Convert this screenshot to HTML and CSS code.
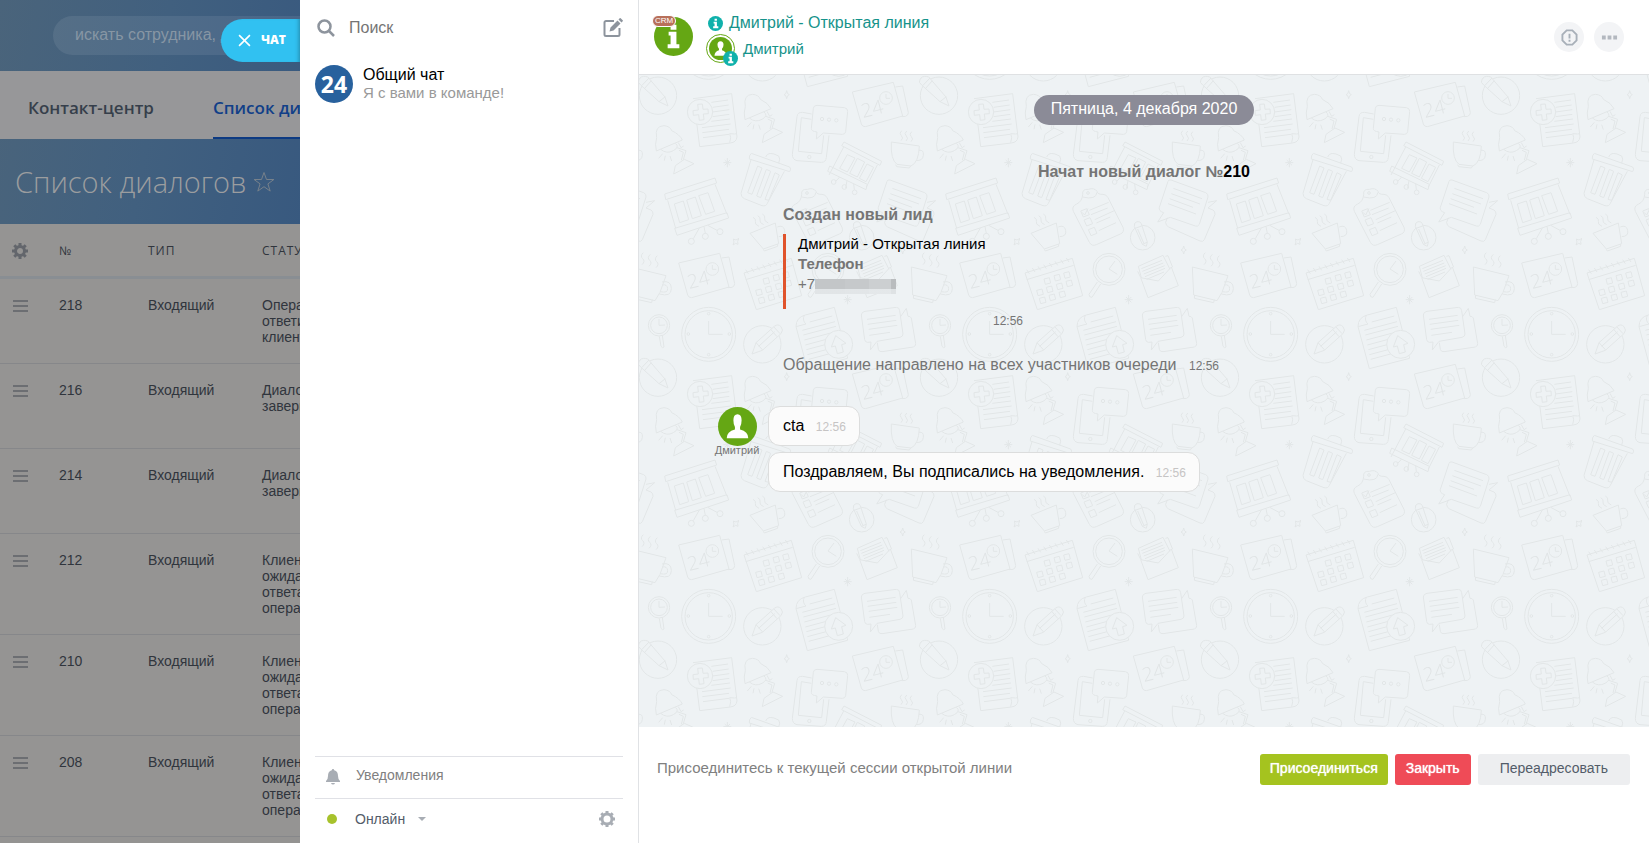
FILE: index.html
```
<!DOCTYPE html>
<html lang="ru">
<head>
    <meta charset="UTF-8">
    <meta name="viewport" content="width=device-width, initial-scale=1.0">
    <title>Чат</title>
    <link rel="stylesheet" href="styles.css">
</head>
<body>
    <!-- Portal page under the slider -->
    <div class="portal">
        <header class="portal-header">
            <input type="text" class="portal-search" placeholder="искать сотрудника, документ" aria-label="Поиск по порталу">
        </header>
        <nav class="portal-nav">
            <a href="#">Контакт-центр</a>
            <a href="#" class="active">Список диалогов</a>
        </nav>
        <div class="portal-title">
            <h1>Список диалогов</h1>
            <svg class="star" viewBox="0 0 22 22"><path d="M11 1.5l2.500 7h7.400l-6 4.400 2.300 7.200-6.200-4.400-6.200 4.400 2.300-7.200-6-4.400h7.400z"/></svg>
        </div>
        <table class="grid">
            <thead>
                <tr>
                    <th class="col-menu"><svg class="gear" viewBox="0 0 16 16"><circle cx="8" cy="8" r="4.500"/><path d="M8 0v3M8 13v3M0 8h3M13 8h3M2.300 2.300l2.200 2.200M11.500 11.500l2.200 2.200M2.300 13.700l2.200-2.200M11.500 4.500l2.200-2.200"/></svg></th>
                    <th class="col-id">№</th>
                    <th class="col-type">ТИП</th>
                    <th class="col-status">СТАТУС</th>
                </tr>
            </thead>
            <tbody>
                <tr><td><span class="burger"></span></td><td>218</td><td>Входящий</td><td>Оператор ответил клиенту</td></tr>
                <tr><td><span class="burger"></span></td><td>216</td><td>Входящий</td><td>Диалог завершен</td></tr>
                <tr><td><span class="burger"></span></td><td>214</td><td>Входящий</td><td>Диалог завершен</td></tr>
                <tr><td><span class="burger"></span></td><td>212</td><td>Входящий</td><td>Клиент ожидает ответа оператора</td></tr>
                <tr><td><span class="burger"></span></td><td>210</td><td>Входящий</td><td>Клиент ожидает ответа оператора</td></tr>
                <tr><td><span class="burger"></span></td><td>208</td><td>Входящий</td><td>Клиент ожидает ответа оператора</td></tr>
            </tbody>
        </table>
        <button class="slider-label">
            <svg viewBox="0 0 12 12"><path d="M1 1l10 10M11 1L1 11"/></svg>
            ЧАТ
        </button>
    </div>

    <!-- Chat list -->
    <aside class="contacts">
        <div class="contacts-search">
            <svg class="icon-search" viewBox="0 0 18 18"><circle cx="7.500" cy="7.500" r="6"/><path d="M12 12l5 5"/></svg>
            <input type="text" placeholder="Поиск" aria-label="Поиск">
            <button class="icon-button" aria-label="Новый чат">
                <svg class="icon-compose" viewBox="0 0 20 20"><path class="line" d="M11 3H3a1.500 1.500 0 0 0-1.500 1.500v12A1.500 1.500 0 0 0 3 18h12a1.500 1.500 0 0 0 1.500-1.500V10"/><path class="fill" d="M6.500 13.500l1-4 7-7 3 3-7 7zM15.500 1.500l1.200-1.200q.5-.5 1 0l2 2q.5.500 0 1l-1.200 1.200z"/></svg>
            </button>
        </div>
        <a href="#" class="contact">
            <span class="contact-avatar">24</span>
            <span class="contact-text">
                <span class="contact-name">Общий чат</span>
                <span class="contact-last">Я с вами в команде!</span>
            </span>
        </a>
        <div class="contacts-footer">
            <a href="#" class="footer-row">
                <svg class="icon-bell" viewBox="0 0 14 16"><path d="M7 0q1.200 0 1.200 1.300C11 2 12 4.300 12 7q0 3.500 2 5v1H0v-1q2-1.500 2-5c0-2.700 1-5 3.800-5.700Q5.800 0 7 0zM5 14h4q-.5 1.500-2 1.500T5 14z"/></svg>
                <span>Уведомления</span>
            </a>
            <div class="footer-row">
                <button class="status-button"><span class="status-dot"></span>Онлайн<span class="caret"></span></button>
                <button class="icon-button" aria-label="Настройки">
                    <svg class="gear" viewBox="0 0 16 16"><circle cx="8" cy="8" r="5"/><path d="M8 0v3M8 13v3M0 8h3M13 8h3M2.300 2.300l2.200 2.200M11.500 11.500l2.200 2.200M2.300 13.700l2.200-2.200M11.500 4.500l2.200-2.200"/></svg>
                </button>
            </div>
        </div>
    </aside>

    <!-- Dialog -->
    <main class="dialog">
        <header class="dialog-header">
            <div class="line-avatar">
                <svg viewBox="0 0 40 40"><circle cx="20" cy="20" r="20"/><path d="M15 15h8v13h3v4H14v-4h3v-9h-2zM17 8h6v5h-6z"/></svg>
                <span class="crm-badge">CRM</span>
            </div>
            <div class="dialog-names">
                <a href="#" class="dialog-title">
                    <svg class="info" viewBox="0 0 16 16"><circle cx="8" cy="8" r="8"/><path d="M6 6h3.500v5H11v2H5.500v-2H7V8H6zM7 3h2.500v2H7z"/></svg>
                    Дмитрий - Открытая линия
                </a>
                <a href="#" class="dialog-user">
                    <span class="user-avatar">
                        <svg class="person" viewBox="0 0 38 38"><circle cx="19" cy="19" r="19"/><path d="M19 7q5 0 5 6 0 4-2.500 6.500v2.500q7 2 7.500 9H9q.5-7 7.500-9v-2.500Q14 17 14 13q0-6 5-6z"/></svg>
                        <svg class="info" viewBox="0 0 16 16"><circle cx="8" cy="8" r="8"/><path d="M6 6h3.500v5H11v2H5.500v-2H7V8H6zM7 3h2.500v2H7z"/></svg>
                    </span>
                    Дмитрий
                </a>
            </div>
            <div class="dialog-actions">
                <button class="round-button" aria-label="Пожаловаться"><svg viewBox="0 0 18 18"><path class="line" d="M6 1.500h6L16.500 6v6L12 16.500H6L1.500 12V6z"/><path class="line" d="M9 5v5M9 11.500v2"/></svg></button>
                <button class="round-button" aria-label="Меню"><svg viewBox="0 0 18 18"><path class="fill" d="M1 7h4v4H1zM7 7h4v4H7zM13 7h4v4h-4z"/></svg></button>
            </div>
        </header>

        <section class="messages">
            <svg class="wallpaper" aria-hidden="true">
                <defs>
                    <pattern id="office" x="100" y="134" width="281" height="282" patternUnits="userSpaceOnUse" viewBox="0 0 843 846">
                        <!-- small cup -->
                        <path d="M33 73l76-31 10 62-46 16zM115 54q18-8 22 10t-18 19M73 121l3 5 40-14v-7M42 25q10 5 7 13t11 14M56 20q10 5 7 13t11 14M70 15q10 5 7 13t11 14"/>
                        <!-- small pencil -->
                        <circle cx="368" cy="86" r="37"/>
                        <path class="cover" d="M343 53q-2-13 8-15t13 6l18 55-3 13-12-6zM345 58l20-7M367 106l14-6M353 60l18 42"/>
                        <!-- calendar -->
                        <path d="M15 192l142-44 31 112-136 42zM20 212l141-43M20 182l8 12M37 177l8 12M54 172l8 12M71 167l8 12M88 162l8 12M105 157l8 12M122 152l8 12M139 147l8 12"/>
                        <path d="M72 210l16-4 4 16-16 4zM102 200l16-4 4 16-16 4zM131 192l16-4 4 16-16 4zM50 244l16-4 4 16-16 4zM79 235l16-4 4 16-16 4zM109 226l16-4 4 16-16 4zM138 217l16-4 4 16-16 4zM58 268l16-4 4 16-16 4zM87 259l16-4 4 16-16 4zM117 250l16-4 4 16-16 4z"/>
                        <!-- magnifier -->
                        <circle cx="267" cy="181" r="48"/><circle cx="267" cy="181" r="40"/>
                        <path d="M285 156l-18 24 25 16M232 219l-25 37q0 10 9 9l26-40"/>
                        <!-- letter -->
                        <path d="M362 206l22 60 91-36-21-56-39 42zM364 206l-9-34 74-33 21 42M353 187l9 18M436 142l8-2 14 35M364 179l62-25M367 187l63-25M371 195l63-25M375 203l60-25M380 211l52-22"/>
                        <!-- cup -->
                        <path d="M517 174l107 26-18 50-15 25-70-17zM612 219q28-6 28 20t-36 16M613 228q15-3 16 11t-22 9M524 258l-1 10 58 13 2-9M556 131q-11 10-2 18t-2 18M577 136q-11 10-2 18t-2 18M598 140q-11 10-2 18t-2 18"/>
                        <!-- planner -->
                        <g id="planner">
                            <path d="M662 162l123-29 28 101-112 32q-10 0-12-8zM791 147l22-3 17 80q0 8-8 11l-12 1"/>
                            <circle cx="763" cy="180" r="19"/><path d="M763 168v13h12"/>
                            <text x="694" y="240" transform="rotate(-14 694 240)">24</text>
                        </g>
                        <use href="#planner" x="-322" y="333"/>
                        <!-- pencil -->
                        <g id="pencil"><circle cx="70" cy="406" r="56"/><path class="cover" d="M39 435l12-34 55-49q11-9 20 1t0 21l-56 50zM51 401l20 22M59 412l48-44M95 361l19 22M104 353l19 21"/></g>
                        <!-- document with arrow -->
                        <path d="M171 353q0-28 28-35l87-23 40 153-121 31zM171 353l30-8q-12-10-5-27M212 339l68-18M190 364l98-26M193 378l98-26M196 393l98-26M199 408l74-20M202 422l60-16M205 437l60-16M209 451l75-20"/>
                        <circle class="cover" cx="299" cy="406" r="42"/>
                        <path d="M290 380l31 23-13 4 5 22-18 5-6-23-12 3z"/>
                        <!-- bubbles -->
                        <path d="M378 307l94-12q9 0 10 10l10 70q0 8-9 10l-69 12-20 26 2-24-10 1q-8 0-9-8l-10-74q0-9 11-11zM384 331l86-12M386 346l86-12M389 361l86-12M391 379l62-9M415 401l3 20q2 8 11 7l94-14q8-3 7-10l-13-77q-3-6-10-5l-5-24-18 26"/>
                        <!-- small magnifier -->
                        <circle cx="603" cy="349" r="32"/><circle cx="603" cy="349" r="25"/>
                        <path d="M603 330v19l18-1M604 382l5 30q4 7 9 2l-5-35"/>
                        <!-- clock -->
                        <circle cx="752" cy="376" r="81"/><circle cx="752" cy="376" r="71"/>
                        <circle cx="752" cy="314" r="4"/><circle cx="752" cy="437" r="4"/><circle cx="691" cy="375" r="4"/><circle cx="814" cy="375" r="4"/>
                        <path d="M752 336v40h42"/>
                        <!-- lamp -->
                        <g id="lamp"><path d="M19 538q-7-35 22-36 19 2 23 15 24 11 32 28L18 578q-5-20 1-40zM31 573q18 15 38 4t6-22M84 553l8 15 8-5M80 568l27 9-8 27M86 576l13 6-6 24M75 622l27-19 29 13-61 31zM37 586l-12 14M45 592l-3 15M59 593l5 15"/></g>
                        <use href="#lamp" x="577" y="94"/>
                        <!-- tablet -->
                        <path d="M218 561l-27-5q-16-1-17 13l-14 113q0 16 14 19l73 5q14 0 15-15l8-66M217 577l-30-5-9 101 70 7 6-55"/>
                        <circle cx="211" cy="690" r="5"/>
                        <path d="M234 535l82 7q10 1 10 11l-6 61q-1 8-10 8l-57-4-21 18 2-21q-18-2-17-11l6-60q1-9 11-9z"/>
                        <circle cx="249" cy="576" r="5"/><circle cx="270" cy="578" r="5"/><circle cx="292" cy="580" r="5"/>
                        <!-- pencil to the right -->
                        <circle cx="600" cy="506" r="56"/>
                        <path class="cover" d="M541 466q2-17 16-18t20 11l44 51 9 27-27-13-54-49zM551 476l22-23M560 484l20-23M603 524l19-15"/>
                        <!-- document with plus -->
                        <path d="M705 515l116-15 16 130q-2 16-20 18l-92 11-15-120M837 620q-4 2-22 0 6 10 0 27M760 526l50-7M764 541l48-7M764 555l50-7M764 569l50-7M760 583l56-7M732 602l86-11M733 617l80-10M735 632l78-10"/>
                        <circle class="cover" cx="726" cy="555" r="38"/>
                        <path d="M719 532l14-1 2 16 15-1 1 14-15 1 2 17-14 2-2-17-16 2-1-14 16-2z"/>
                        <!-- trash -->
                        <path d="M37 679l115 41q6 6 0 14L31 696q-2-10 6-17zM80 690q7-20 39-3 6 8 0 22M36 698L6 799q0 12 10 16l53 21q12 3 16-7l51-96M56 717l-30 80 13 5 30-79zM82 727l-29 80 12 5 30-79zM108 737l-30 80 11 3 32-76z"/>
                        <!-- board -->
                        <path d="M315 645l113 58-5 12-115-59zM314 660l-44 84M415 714l-33 66M272 717l113 55-4 16-115-55zM325 683l23 10-23 42-23-11zM355 694l22 11-22 45-23-11zM384 711l20 10-23 43-20-10zM302 750l-12 13M324 761l-4 22M344 770l2 18"/>
                        <circle cx="284" cy="765" r="7"/><circle cx="316" cy="780" r="7"/><circle cx="347" cy="796" r="7"/>
                        <!-- mug -->
                        <path d="M457 645l84 12q-2 50-25 60l-42-5q-20-14-17-67zM540 670q15-3 13 15t-22 15M470 713l3 6 38 4 4-6M488 611q-9 8-1 15t-1 15M503 612q-9 8-1 15t-1 15M518 614q-9 8-1 15t-1 15"/>
                        <!-- icons that run over the tile edge -->
                        <g id="edge">
                            <path d="M188 803q-2-18 17-16 18-6 26 6 2 10 18 9 10 0 15 10l45 89q5 15-8 20l-72 32q-14 6-21-7l-48-93q-6-15 10-22 16-7 18-28zM188 810q40 10 43-14M182 852l18-7 8 18-18 7zM192 879l18-7 8 18-18 7zM205 908l18-7 8 18-18 7zM186 856l8 8 10-20M208 850l58-24M213 863l50-20M224 878l61-28M229 888l42-18M236 911l52-24"/>
                            <circle cx="204" cy="798" r="4"/>
                            <path d="M453 759l104 38q9 4 7 13l-26 82q-5 8-12 5l-75-26-38 14 18-28q-16-5-13-16l26-78q2-6 9-4zM460 784l86 31M454 800l86 31M449 815l70 26M444 830l84 31M442 872l-5 14q0 10 9 14l94 42q9 4 13-4l32-76q1-8-6-13l-15-6 26-22-26 5"/>
                            <path d="M620 801l151-48 5 15-153 50zM629 820l24 84M771 772l36 90M650 904l157-47 5 16-155 52zM649 831l27-9 16 56-27 9zM686 819l26-9 18 56-27 9zM722 806l28-9 20 56-27 9zM724 903l-18 32M738 899l4 20M749 895l28 15"/>
                            <circle cx="700" cy="943" r="9"/><circle cx="742" cy="928" r="9"/><circle cx="786" cy="914" r="9"/>
                        </g>
                        <use href="#edge" y="-846"/>
                        <!-- sparkles -->
                        <path d="M491 111q1 11 8 12-7 1-8 12-1-11-8-12 7-1 8-12zM143 491q1 11 8 12-7 1-8 12-1-11-8-12 7-1 8-12zM826 90l8 3 9-5-4 9 1 9-7-3-8 5 3-9z"/>
                        <path d="M326 258v28M314 272h24M318 264l16 16M334 264l-16 16M808 693v28M796 707h24M800 699l16 16M816 699l-16 16"/>
                    </pattern>
                </defs>
                <rect width="100%" height="100%" fill="url(#office)"/>
            </svg>

            <div class="date-label"><span>Пятница, 4 декабря 2020</span></div>
            <div class="session-start">Начат новый диалог №<b>210</b></div>

            <div class="system lead">
                <strong>Создан новый лид</strong>
                <div class="attach">
                    <a href="#">Дмитрий - Открытая линия</a>
                    <strong>Телефон</strong>
                    <span class="phone">+7<span class="mosaic"></span></span>
                </div>
                <time>12:56</time>
            </div>

            <div class="system">
                <span>Обращение направлено на всех участников очереди</span>
                <time>12:56</time>
            </div>

            <div class="message">
                <div class="author">
                    <svg class="person" viewBox="0 0 38 38"><circle cx="19" cy="19" r="19"/><path d="M19 7q4 0 4 6 0 4-1.500 6.500v2.500q8 2 8 8.500h-21q0-6.500 8-8.500v-2.500Q15 17 15 13q0-6 4-6z"/></svg>
                    <span>Дмитрий</span>
                </div>
                <div class="bubbles">
                    <div class="bubble">cta <time>12:56</time></div>
                    <div class="bubble">Поздравляем, Вы подписались на уведомления. <time>12:56</time></div>
                </div>
            </div>
        </section>

        <footer class="join-panel">
            <span class="join-text">Присоединитесь к текущей сессии открытой линии</span>
            <button class="btn btn-green">Присоединиться</button>
            <button class="btn btn-red">Закрыть</button>
            <button class="btn btn-gray">Переадресовать</button>
        </footer>
    </main>
</body>
</html>
```
FILE: styles.css
```
* {
    box-sizing: border-box;
}

body {
    margin: 0;
    display: flex;
    height: 100vh;
    overflow: hidden;
    font-family: "Liberation Sans", Arial, sans-serif;
    font-size: 16px;
    line-height: 20px;
    background-color: #fff;
    color: #000;
}

a {
    color: inherit;
    text-decoration: none;
}

button, input {
    font-family: inherit;
    border: none;
    background: none;
    padding: 0;
    outline: none;
}

button {
    cursor: pointer;
}

svg {
    display: block;
    flex: none;
}

/* Portal */
.portal {
    position: relative;
    flex: none;
    width: 300px;
    overflow: hidden;
    background: linear-gradient(100deg, #4a647b 0, #41607f 50%, #38597f 100%) 0 0 / 100% 240px no-repeat #949392;
}

.portal-header {
    height: 71px;
    padding: 16px 0 0 53px;
}

.portal-search {
    width: 400px;
    height: 39px;
    padding: 0 22px 2px;
    border-radius: 20px;
    background-color: rgba(255, 255, 255, 0.08);
    font-size: 16px;
}

.portal-search::placeholder {
    color: #8796a4;
    opacity: 1;
}

.portal-nav {
    display: flex;
    gap: 59px;
    height: 68px;
    padding-left: 28px;
    background-color: #979799;
    font: 600 17px/74px "Open Sans", sans-serif;
    color: #363f4b;
    white-space: nowrap;
}

.portal-nav .active {
    height: 68px;
    color: #113f88;
    border-bottom: 2px solid #0d3a82;
}

.portal-title {
    display: flex;
    align-items: center;
    gap: 6px;
    height: 85px;
    padding-left: 15px;
}

.portal-title h1 {
    margin: 0;
    font: 300 29px/40px "Open Sans", sans-serif;
    color: #9b9d9f;
}

.star {
    width: 22px;
    height: 22px;
    fill: none;
    stroke: #77818b;
}

.gear {
    width: 16px;
    height: 16px;
    fill: none;
    stroke: #63666c;
    stroke-width: 3;
}

.grid {
    width: 372px;
    table-layout: fixed;
    border-collapse: collapse;
    background-color: #959493;
    font-size: 14px;
    line-height: 16px;
    color: #30353d;
}

.grid th {
    height: 53px;
    padding: 2px 0 0;
    border-bottom: 3px solid #898e93;
    font: 400 12px/16px "Open Sans", sans-serif;
    text-align: left;
}

.grid td {
    height: 85px;
    padding: 18px 0;
    border-bottom: 1px solid #86878a;
    vertical-align: top;
}

.grid .col-menu {
    width: 59px;
    padding-left: 12px;
}

.grid .col-id {
    width: 89px;
}

.grid .col-type {
    width: 114px;
}

.grid .col-type, .grid .col-status {
    letter-spacing: 1px;
}

.grid td:last-child {
    padding-right: 30px;
}

.burger {
    display: block;
    width: 15px;
    height: 12px;
    margin: 3px 0 0 13px;
    background: repeating-linear-gradient(#6c6e72 0 2px, transparent 2px 5px);
}

.slider-label {
    position: absolute;
    top: 19px;
    right: 0;
    display: flex;
    align-items: center;
    gap: 10px;
    width: 79px;
    height: 43px;
    padding: 0 0 2px 17px;
    border-radius: 22px 0 0 22px;
    background-color: #31c1f1;
    box-shadow: inset -4px 0 4px -3px rgba(0, 0, 0, 0.3);
    color: #fff;
    font: 800 12px/16px "Open Sans", sans-serif;
}

.slider-label svg {
    width: 13px;
    height: 13px;
    margin-top: 2px;
    stroke: #fff;
    stroke-width: 1.5;
}

/* Chat list */
.contacts {
    display: flex;
    flex-direction: column;
    flex: none;
    width: 339px;
    border-right: 1px solid #e0e2e5;
}

.contacts-search {
    display: flex;
    align-items: center;
    height: 55px;
    padding: 0 15px 0 17px;
}

.contacts-search input {
    flex: 1;
    min-width: 0;
    margin-left: 14px;
    font-size: 16px;
}

.contacts-search input::placeholder {
    color: #757575;
    opacity: 1;
}

.icon-search {
    width: 18px;
    height: 18px;
    fill: none;
    stroke: #8d949d;
    stroke-width: 2.5;
}

.icon-compose {
    width: 20px;
    height: 20px;
}

.line {
    fill: none;
    stroke: #8d949d;
    stroke-width: 2;
}

.fill {
    fill: #8d949d;
}

.contact {
    display: flex;
    align-items: center;
    gap: 10px;
    height: 58px;
    padding-left: 15px;
}

.contact-avatar {
    display: flex;
    align-items: center;
    justify-content: center;
    width: 38px;
    height: 38px;
    border-radius: 50%;
    background-color: #28619d;
    color: #fff;
    font: 700 23px/24px "Open Sans", sans-serif;
}

.contact-text span {
    display: block;
    line-height: 18px;
}

.contact-last {
    color: #999;
    font-size: 15px;
}

.contacts-footer {
    margin: auto 15px 3px;
    font-size: 14px;
    color: #808080;
}

.footer-row {
    display: flex;
    align-items: center;
    height: 42px;
    padding: 0 8px 2px 10px;
    border-top: 1px solid #e0e1e6;
}

.footer-row > span {
    padding-bottom: 4px;
}

.icon-bell {
    width: 14px;
    height: 16px;
    margin: 0 16px 0 1px;
    fill: #a8adb4;
}

.status-button {
    display: flex;
    align-items: center;
    margin-right: auto;
    font-size: 14px;
    color: #535c69;
}

.status-dot {
    width: 10px;
    height: 10px;
    margin: 0 18px 0 2px;
    border-radius: 50%;
    background-color: #a7c22c;
}

.caret {
    margin-left: 13px;
    border: 4px solid transparent;
    border-top-color: #a8adb4;
    border-bottom: none;
}

.contacts-footer .gear {
    stroke: #a8adb4;
}

/* Dialog */
.dialog {
    display: flex;
    flex-direction: column;
    flex: 1;
    min-width: 0;
}

.dialog-header {
    display: flex;
    height: 75px;
    padding: 0 25px 0 15px;
    border-bottom: 1px solid #dfe1e3;
    color: #16938b;
}

.line-avatar {
    position: relative;
    width: 39px;
    height: 39px;
    margin-top: 17px;
}

.line-avatar svg, .person {
    width: 39px;
    height: 39px;
    fill: #fff;
}

.line-avatar circle, .person circle {
    fill: #65a714;
}

.crm-badge {
    position: absolute;
    top: -2px;
    left: -2px;
    padding: 0 2px;
    border: 1px solid #fff;
    border-radius: 6px;
    background-color: #b8705a;
    color: #fff;
    font-size: 8px;
    line-height: 10px;
}

.dialog-names {
    margin: 13px 0 0 13px;
}

.dialog-title, .dialog-user {
    display: flex;
    align-items: center;
}

.dialog-title {
    gap: 6px;
}

.info {
    width: 15px;
    height: 15px;
    fill: #fff;
}

.info circle {
    fill: #10b1ab;
}

.dialog-user {
    gap: 8px;
    margin-top: 1px;
    font-size: 15px;
}

.dialog-title .info {
    margin-left: 2px;
}

.user-avatar {
    position: relative;
    width: 29px;
    height: 29px;
    padding: 2px;
    border: 1px solid #65a714;
    border-radius: 50%;
}

.user-avatar .person {
    width: 23px;
    height: 23px;
}

.user-avatar .info {
    position: absolute;
    right: -4px;
    bottom: -4px;
}

.dialog-actions {
    display: flex;
    gap: 10px;
    margin: 22px 0 0 auto;
}

.round-button {
    display: flex;
    align-items: center;
    justify-content: center;
    width: 30px;
    height: 30px;
    border-radius: 50%;
    background-color: #f3f4f6;
}

.round-button svg {
    width: 17px;
    height: 17px;
}

.round-button .line {
    stroke: #a8b0b9;
}

.round-button .fill {
    fill: #b3b8bf;
}

.messages {
    position: relative;
    flex: 1;
    min-height: 0;
    padding-top: 20px;
    background-color: #eef2f4;
    color: #757575;
    overflow: hidden;
}

.messages > div {
    position: relative;
}

.wallpaper {
    position: absolute;
    top: 0;
    left: 0;
    width: 100%;
    height: 100%;
}

.wallpaper path, .wallpaper circle {
    fill: none;
    stroke: #e2e6e7;
    stroke-width: 3;
}

.wallpaper .cover {
    fill: #eef2f4;
}

.wallpaper text {
    fill: #e0e4e5;
    font: 300 58px "Open Sans", sans-serif;
}

.date-label {
    text-align: center;
}

.date-label span {
    display: inline-block;
    padding: 4px 17px 6px;
    border-radius: 15px;
    background-color: #8b8b97;
    color: #fff;
}

.session-start {
    margin-top: 37px;
    text-align: center;
    font-weight: 700;
}

.session-start b {
    color: #000;
}

.system {
    margin: 28px 0 0 144px;
}

.system time {
    margin-left: 8px;
    font-size: 12px;
    line-height: 12px;
}

.lead {
    width: 240px;
    margin-top: 23px;
}

.lead time {
    display: block;
    margin-top: 6px;
    text-align: right;
}

.attach {
    display: flex;
    flex-direction: column;
    width: 200px;
    height: 75px;
    margin-top: 9px;
    padding-left: 12px;
    border-left: 3px solid #e0532b;
    font-size: 15px;
    line-height: 20px;
    white-space: nowrap;
}

.attach a {
    color: #000;
}

.phone {
    display: flex;
}

.mosaic {
    width: 81px;
    height: 15px;
    margin-top: 5px;
    background: linear-gradient(transparent 10px, rgba(238, 242, 244, 0.7) 10px), linear-gradient(90deg, #c3c6c8 0 30px, #c6c9cb 30px 54px, #cccfd1 54px 76px, #b9bcbe 76px);
}

.message {
    display: flex;
    margin: 31px 0 0 67px;
}

.author {
    display: flex;
    flex-direction: column;
    align-items: center;
    width: 62px;
    padding-top: 1px;
    font-size: 11px;
    line-height: 8px;
}

.bubbles {
    display: flex;
    flex-direction: column;
    align-items: flex-start;
    gap: 6px;
}

.bubble {
    padding: 9px 13px 9px 14px;
    border: 1px solid #dcdddd;
    border-radius: 12px;
    background-color: #fbfbfb;
    color: #000;
}

.bubble time {
    margin-left: 7px;
    font-size: 12px;
    line-height: 12px;
    color: #c6c4c4;
}

.join-panel {
    display: flex;
    align-items: flex-start;
    gap: 7px;
    height: 116px;
    padding: 27px 19px 0 18px;
}

.join-text {
    margin-right: auto;
    font-size: 15px;
    line-height: 28px;
    color: #808080;
}

.btn {
    height: 31px;
    padding: 0 11px 3px;
    border-radius: 3px;
    font-size: 14px;
    color: #fff;
}

.btn-green {
    padding: 0 10px 3px;
    background-color: #a5c31f;
    text-shadow: 0 0 1px #fff;
}

.btn-red {
    background-color: #ef4b57;
    text-shadow: 0 0 1px #fff;
}

.btn-gray {
    padding: 0 22px 3px;
    background-color: #edeef0;
    color: #535c69;
}
```
